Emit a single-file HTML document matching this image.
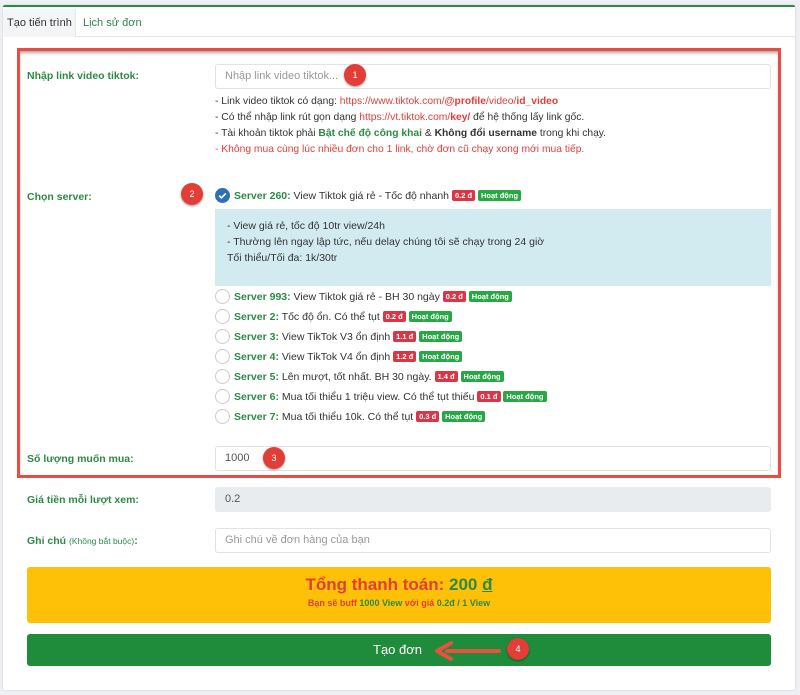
<!DOCTYPE html>
<html><head><meta charset="utf-8"><style>
*{box-sizing:border-box;margin:0;padding:0}
body{width:800px;height:695px;background:#eef0f3;font-family:"Liberation Sans",Arial,sans-serif;font-size:11px;color:#333;position:relative;overflow:hidden}
.card{position:absolute;left:3px;top:5px;width:792px;height:685px;background:#fff;border-top:2px solid #2d8a46;border-radius:2px;box-shadow:0 0 2px rgba(0,0,0,.15)}
.abs{position:absolute}
.tabs{position:absolute;left:3px;top:8px;width:792px;height:29px;border-bottom:1px solid #e3e6ea}
.tab1{position:absolute;left:0;top:1px;width:73px;height:28px;background:#f4f5f6;border-right:1px solid #e3e6ea;font-size:11px;line-height:28px;padding-left:4px;color:#333;white-space:nowrap}
.tab2{position:absolute;left:80px;top:1px;line-height:28px;color:#2d8a46;font-size:11px;white-space:nowrap}
.red{position:absolute;left:17px;top:48px;width:764px;height:430px;border:3px solid #ea4c44;box-shadow:inset 0 3px 3px -1px rgba(0,0,0,.35)}
.lbl{position:absolute;left:27px;color:#2d8a46;font-weight:bold;font-size:10.5px}
.inp{position:absolute;left:215px;width:556px;height:25px;border:1px solid #dfe2e6;border-radius:3px;background:#fff;padding-left:9px;line-height:23px;font-size:11px;color:#555}
.ph{color:#999}
.num{position:absolute;width:22px;height:22px;border-radius:50%;background:#e33d38;color:#fff;font-size:9px;text-align:center;line-height:22px;box-shadow:0 1px 2px rgba(0,0,0,.4)}
.note{position:absolute;left:215px;font-size:10.3px;line-height:16px;color:#333}
.r{color:#e33d38}.g{color:#2d8a46}
.srv{position:absolute;left:215px;font-size:10.5px;height:18px;line-height:18px;white-space:nowrap}
.srv b.g{font-weight:bold}
.rad{display:inline-block;width:15px;height:15px;border:1px solid #ccc;border-radius:50%;vertical-align:middle;margin-right:4px;position:relative;top:-1px}
.bd{display:inline-block;color:#fff;font-size:7.5px;font-weight:bold;padding:0 3px;height:11px;line-height:11px;border-radius:2px;vertical-align:middle;position:relative;top:-1px}
.bd.r1{background:#dc3545}.bd.g1{background:#28a745}
.info{position:absolute;left:215px;top:209px;width:556px;height:77px;background:#d2ebf1;padding:9px 12px;font-size:10.5px;line-height:16px;color:#333}
</style></head><body>
<div class="card"></div>
<div class="tabs"><div class="tab1">Tạo tiến trình</div><div class="tab2">Lịch sử đơn</div></div>
<div class="red"></div>

<div class="lbl" style="top:70px">Nhập link video tiktok:</div>
<div class="inp" style="top:64px"><span class="ph">Nhập link video tiktok...</span></div>
<div class="num" style="left:344px;top:64px">1</div>
<div class="note" style="top:94px">
- Link video tiktok có dạng: <span class="r">https://www.tiktok.com/<b>@profile</b>/video/<b>id_video</b></span><br>
- Có thể nhập link rút gọn dạng <span class="r">https://vt.tiktok.com/<b>key/</b></span> để hệ thống lấy link gốc.<br>
- Tài khoản tiktok phải <b class="g">Bật chế độ công khai</b> &amp; <b>Không đổi username</b> trong khi chạy.<br>
<span class="r">- Không mua cùng lúc nhiều đơn cho 1 link, chờ đơn cũ chạy xong mới mua tiếp.</span>
</div>

<div class="lbl" style="top:191px">Chọn server:</div>
<div class="num" style="left:181px;top:183px">2</div>
<div class="srv" style="top:187px"><svg width="15" height="15" viewBox="0 0 16 16" style="vertical-align:middle;margin-right:4px;position:relative;top:-1px"><circle cx="8" cy="8" r="8" fill="#2f6fb3"/><path d="M4.5 8.2l2.3 2.3 4.7-4.7" stroke="#fff" stroke-width="1.8" fill="none"/></svg><b class="g">Server 260:</b> View Tiktok giá rẻ - Tốc độ nhanh <span class="bd r1">0.2 đ</span> <span class="bd g1">Hoạt động</span></div>
<div class="info">- View giá rẻ, tốc độ 10tr view/24h<br>- Thường lên ngay lập tức, nếu delay chúng tôi sẽ chạy trong 24 giờ<br>Tối thiểu/Tối đa: 1k/30tr</div>
<div class="srv" style="top:288px"><span class="rad"></span><b class="g">Server 993:</b> View Tiktok giá rẻ - BH 30 ngày <span class="bd r1">0.2 đ</span> <span class="bd g1">Hoạt động</span></div>
<div class="srv" style="top:308px"><span class="rad"></span><b class="g">Server 2:</b> Tốc độ ổn. Có thể tụt <span class="bd r1">0.2 đ</span> <span class="bd g1">Hoạt động</span></div>
<div class="srv" style="top:328px"><span class="rad"></span><b class="g">Server 3:</b> View TikTok V3 ổn định <span class="bd r1">1.1 đ</span> <span class="bd g1">Hoạt động</span></div>
<div class="srv" style="top:348px"><span class="rad"></span><b class="g">Server 4:</b> View TikTok V4 ổn định <span class="bd r1">1.2 đ</span> <span class="bd g1">Hoạt động</span></div>
<div class="srv" style="top:368px"><span class="rad"></span><b class="g">Server 5:</b> Lên mượt, tốt nhất. BH 30 ngày. <span class="bd r1">1.4 đ</span> <span class="bd g1">Hoạt động</span></div>
<div class="srv" style="top:388px"><span class="rad"></span><b class="g">Server 6:</b> Mua tối thiểu 1 triệu view. Có thể tụt thiếu <span class="bd r1">0.1 đ</span> <span class="bd g1">Hoạt động</span></div>
<div class="srv" style="top:408px"><span class="rad"></span><b class="g">Server 7:</b> Mua tối thiểu 10k. Có thể tụt <span class="bd r1">0.3 đ</span> <span class="bd g1">Hoạt động</span></div>

<div class="lbl" style="top:453px">Số lượng muốn mua:</div>
<div class="inp" style="top:446px">1000</div>
<div class="num" style="left:263px;top:447px">3</div>

<div class="lbl" style="top:494px">Giá tiền mỗi lượt xem:</div>
<div class="inp" style="top:487px;background:#e9ecef;border-color:#e9ecef">0.2</div>

<div class="lbl" style="top:535px">Ghi chú <span style="font-weight:normal;font-size:8.5px">(Không bắt buộc)</span>:</div>
<div class="inp" style="top:528px"><span class="ph">Ghi chú về đơn hàng của bạn</span></div>

<div class="abs" style="left:27px;top:567px;width:744px;height:56px;background:#ffc107;border-radius:3px;text-align:center">
<div style="margin-top:8px;font-size:17px;font-weight:bold;color:#e33d38">Tổng thanh toán: <span class="g">200 <u>đ</u></span></div>
<div style="margin-top:3px;font-size:9px;font-weight:bold;color:#e33d38">Bạn sẽ buff <span class="g">1000 View</span> với giá <span class="g">0.2đ / 1 View</span></div>
</div>

<div class="abs" style="left:27px;top:634px;width:744px;height:32px;background:#1f8c3c;border-radius:3px;color:#fff;line-height:32px;font-size:13px;padding-left:346px">Tạo đơn</div>
<svg class="abs" style="left:433px;top:641px" width="70" height="20" viewBox="0 0 70 20"><path d="M66 10H14" stroke="#e8503f" stroke-width="4" stroke-linecap="round"/><path d="M18 2L4 10l14 8" stroke="#e8503f" stroke-width="4" fill="none" stroke-linecap="round" stroke-linejoin="round"/></svg>
<div class="num" style="left:507px;top:638px">4</div>
</body></html>
